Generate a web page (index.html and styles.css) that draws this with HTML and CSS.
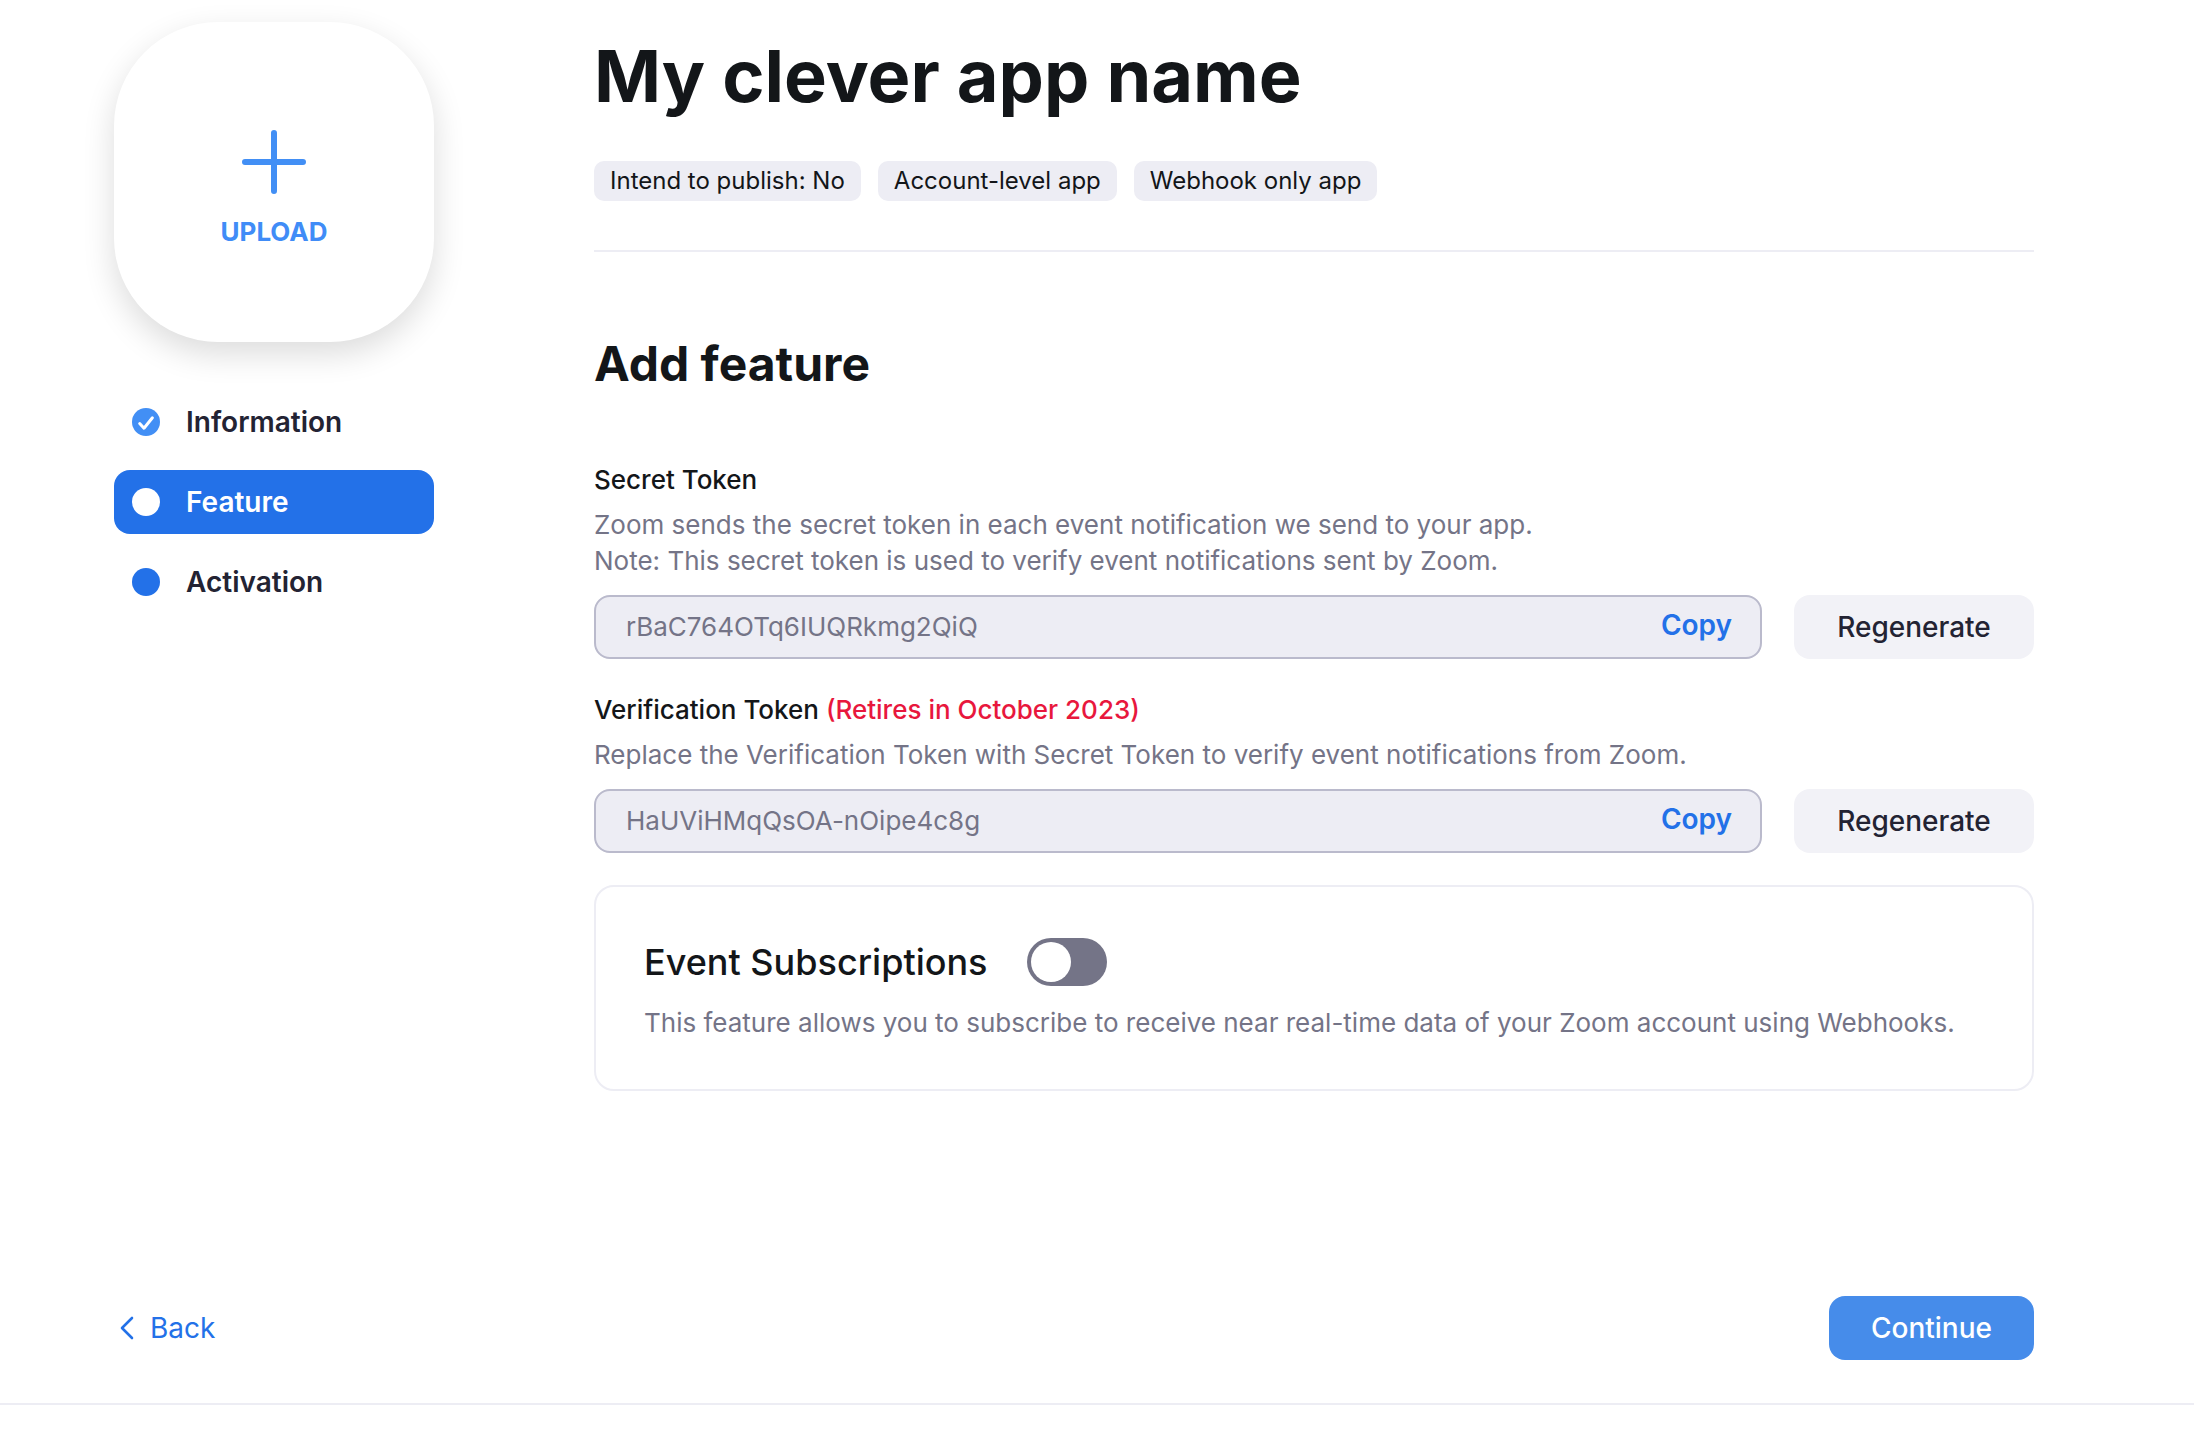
FILE: index.html
```html
<!DOCTYPE html>
<html lang="en">
<head>
<meta charset="utf-8">
<meta name="viewport" content="width=device-width, initial-scale=1">
<title>My clever app name</title>
<link rel="stylesheet" href="styles.css">
</head>
<body>
<div class="page">
  <div class="layout">
    <aside class="sidebar">
      <button class="upload" type="button">
        <svg class="upload-icon" viewBox="0 0 64 64" aria-hidden="true"><path d="M32 3v58M3 32h58"/></svg>
        <span>UPLOAD</span>
      </button>
      <nav class="steps">
        <a class="step" href="#information">
          <svg class="step-icon" viewBox="0 0 28 28" aria-hidden="true"><circle class="dot-done" cx="14" cy="14" r="14"/><path class="tick" d="M7.7 15.5L12 20.2 20.4 9.8"/></svg>
          Information
        </a>
        <a class="step step-current" href="#feature" aria-current="step">
          <svg class="step-icon" viewBox="0 0 28 28" aria-hidden="true"><circle class="dot-current" cx="14" cy="14" r="14"/></svg>
          Feature
        </a>
        <a class="step" href="#activation">
          <svg class="step-icon" viewBox="0 0 28 28" aria-hidden="true"><circle class="dot-next" cx="14" cy="14" r="14"/></svg>
          Activation
        </a>
      </nav>
    </aside>
    <main class="main">
      <header class="app-header">
        <h1 class="app-name">My clever app name</h1>
        <ul class="tags">
          <li class="tag">Intend to publish: No</li>
          <li class="tag">Account-level app</li>
          <li class="tag">Webhook only app</li>
        </ul>
      </header>
      <h2 class="section-title">Add feature</h2>
      <section class="token">
        <label class="token-label" for="secret">Secret Token</label>
        <p class="hint">Zoom sends the secret token in each event notification we send to your app.<br>Note: This secret token is used to verify event notifications sent by Zoom.</p>
        <div class="token-row">
          <div class="token-box">
            <input class="token-input" id="secret" type="text" value="rBaC764OTq6IUQRkmg2QiQ" readonly>
            <button class="copy" type="button">Copy</button>
          </div>
          <button class="button button-plain" type="button">Regenerate</button>
        </div>
      </section>
      <section class="token">
        <label class="token-label" for="verification">Verification Token <span class="warning">(Retires in October 2023)</span></label>
        <p class="hint">Replace the Verification Token with Secret Token to verify event notifications from Zoom.</p>
        <div class="token-row">
          <div class="token-box">
            <input class="token-input" id="verification" type="text" value="HaUViHMqQsOA-nOipe4c8g" readonly>
            <button class="copy" type="button">Copy</button>
          </div>
          <button class="button button-plain" type="button">Regenerate</button>
        </div>
      </section>
      <section class="card">
        <div class="card-head">
          <label class="card-title" for="events">Event Subscriptions</label>
          <input class="toggle" id="events" type="checkbox" role="switch">
        </div>
        <p class="hint">This feature allows you to subscribe to receive near real-time data of your Zoom account using Webhooks.</p>
      </section>
    </main>
  </div>
  <footer class="actions">
    <a class="back" href="#information">
      <svg class="back-icon" viewBox="0 0 14 24" aria-hidden="true"><path d="M12 2L2 12l10 10"/></svg>
      Back
    </a>
    <button class="button button-primary" type="button">Continue</button>
  </footer>
</div>
</body>
</html>
```
FILE: styles.css
```css
* {
  box-sizing: border-box;
}

body {
  margin: 0;
  background: #fff;
  color: #131619;
  font-family: Inter, "Liberation Sans", sans-serif;
  font-size: 26px;
  line-height: 36px;
}

button,
input {
  margin: 0;
  padding: 0;
  border: 0;
  font: inherit;
}

button {
  cursor: pointer;
}

a {
  text-decoration: none;
}

h1,
h2,
p,
ul {
  margin: 0;
  padding: 0;
}

.page {
  border-bottom: 2px solid #ededf4;
}

.layout {
  display: flex;
  gap: 160px;
  padding: 22px 160px 0 114px;
}

.sidebar {
  flex: 0 0 320px;
}

.upload {
  display: flex;
  flex-direction: column;
  align-items: center;
  justify-content: center;
  gap: 20px;
  width: 100%;
  aspect-ratio: 1;
  padding-top: 16px;
  border-radius: 104px;
  background: #fff;
  box-shadow: 0 12px 32px rgba(0, 0, 0, 0.14);
  color: #408cf7;
  font-weight: 700;
}

.upload-icon {
  width: 64px;
  height: 64px;
  fill: none;
  stroke: #428ff5;
  stroke-width: 6;
  stroke-linecap: round;
}

.steps {
  display: flex;
  flex-direction: column;
  gap: 16px;
  margin-top: 48px;
}

.step {
  display: flex;
  align-items: center;
  gap: 26px;
  height: 64px;
  padding: 0 18px;
  border-radius: 16px;
  color: #232333;
  font-size: 28px;
  font-weight: 600;
}

.step-current {
  background: #2371e8;
  color: #fff;
}

.step-icon {
  width: 28px;
  height: 28px;
}

.dot-done {
  fill: #428ff5;
}

.dot-current {
  fill: #fff;
}

.dot-next {
  fill: #2371e8;
}

.tick {
  fill: none;
  stroke: #fff;
  stroke-width: 3;
  stroke-linecap: round;
  stroke-linejoin: round;
}

.main {
  flex: 1;
  min-width: 0;
}

.app-header {
  padding-bottom: 49px;
  border-bottom: 2px solid #ededf4;
}

.app-name {
  font-size: 72px;
  font-weight: 700;
  line-height: 108px;
}

.tags {
  display: flex;
  flex-wrap: wrap;
  gap: 17px;
  margin-top: 31px;
  list-style: none;
}

.tag {
  padding: 2px 16px;
  border-radius: 10px;
  background: #ededf4;
  font-size: 24px;
}

.section-title {
  margin: 80px 0 66px;
  font-size: 48px;
  font-weight: 700;
  line-height: 64px;
}

.token + .token {
  margin-top: 33px;
}

.token-label {
  display: block;
  margin-bottom: 9px;
  font-weight: 500;
}

.warning {
  color: #e8173d;
}

.hint {
  color: #747487;
}

.token-row {
  display: flex;
  gap: 32px;
  margin-top: 16px;
}

.token-box {
  display: flex;
  flex: 1;
  align-items: center;
  height: 64px;
  padding: 0 28px 0 30px;
  border: 2px solid #babacc;
  border-radius: 16px;
  background: #ededf4;
}

.token-input {
  flex: 1;
  min-width: 0;
  background: transparent;
  color: #747487;
}

.copy {
  padding-bottom: 4px;
  background: transparent;
  color: #2371e8;
  font-size: 28px;
  font-weight: 600;
}

.button {
  height: 64px;
  border-radius: 16px;
  font-size: 28px;
  font-weight: 500;
}

.button-plain {
  width: 240px;
  background: #f2f2f7;
  color: #232333;
}

.button-primary {
  width: 205px;
  background: #468cea;
  color: #fff;
}

.card {
  margin-top: 32px;
  padding: 48px;
  border: 2px solid #ededf4;
  border-radius: 20px;
}

.card-head {
  display: flex;
  align-items: center;
  gap: 39px;
  margin-bottom: 16px;
}

.card-title {
  font-size: 36px;
  font-weight: 500;
  line-height: 54px;
}

.toggle {
  width: 80px;
  height: 48px;
  padding: 4px;
  border-radius: 24px;
  background: #747487;
  appearance: none;
  cursor: pointer;
}

.toggle::before {
  content: "";
  display: block;
  width: 40px;
  height: 40px;
  border-radius: 50%;
  background: #fff;
}

.toggle:checked::before {
  margin-left: auto;
}

.actions {
  display: flex;
  align-items: center;
  justify-content: space-between;
  margin-top: 205px;
  padding: 0 160px 43px 120px;
}

.back {
  display: flex;
  align-items: center;
  gap: 16px;
  color: #2371e8;
  font-size: 28px;
}

.back-icon {
  width: 14px;
  height: 24px;
  fill: none;
  stroke: currentColor;
  stroke-width: 2.6;
  stroke-linecap: round;
  stroke-linejoin: round;
}
```
